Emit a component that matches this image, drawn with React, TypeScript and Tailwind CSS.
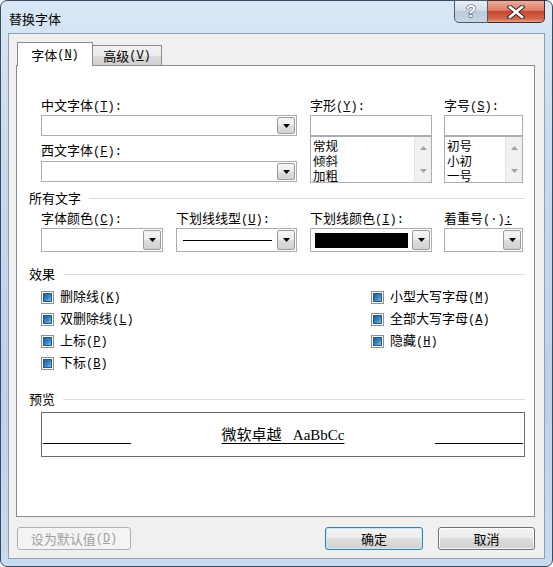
import React from "react";

const M = "font-['Liberation_Mono','DejaVu_Sans_Mono',monospace] text-[12px]";

function K({ k, colon = true }: { k: string; colon?: boolean }) {
  return (
    <span className={M}>
      (<span className="underline underline-offset-1">{k}</span>)
      {colon ? ":" : ""}
    </span>
  );
}

function Label({ children }: { children: React.ReactNode }) {
  return <div className="h-[16px] leading-[16px] text-[13px] whitespace-nowrap">{children}</div>;
}

function DropBtn() {
  return (
    <div className="w-[18px] h-full shrink-0 border border-[#9a9a9a] rounded-[2px] bg-[linear-gradient(180deg,#f7f7f7,#ececec_50%,#dedede_50%,#d2d2d2)] flex items-center justify-center">
      <svg width="7" height="4" viewBox="0 0 7 4">
        <path d="M0 0h7L3.5 4z" fill="#000" />
      </svg>
    </div>
  );
}

function Combo({ className, children }: { className: string; children?: React.ReactNode }) {
  return (
    <div className={`flex border border-[#abadb3] bg-white p-px ${className}`}>
      <div className="flex-1 min-w-0 flex items-center">{children}</div>
      <DropBtn />
    </div>
  );
}

function ListBox({ items }: { items: string[] }) {
  return (
    <div className="h-[47px] flex border border-[#abadb3] bg-white">
      <div className="flex-1 pl-[2px] text-[12.5px] leading-[15px] pt-px">
        {items.map((t) => (
          <div key={t} className="h-[15px]">{t}</div>
        ))}
      </div>
      <div className="w-[17px] shrink-0 bg-[#f0f0f0] border-l border-[#e3e3e3] flex flex-col justify-between items-center py-[9px]">
        <svg width="7" height="4" viewBox="0 0 7 4">
          <path d="M0 4h7L3.5 0z" fill="#a3a3a3" />
        </svg>
        <svg width="7" height="4" viewBox="0 0 7 4">
          <path d="M0 0h7L3.5 4z" fill="#a3a3a3" />
        </svg>
      </div>
    </div>
  );
}

function TextBox() {
  return <div className="h-[21px] border border-[#abadb3] bg-white" />;
}

function Header({ children }: { children: React.ReactNode }) {
  return (
    <div className="flex items-center gap-[8px] pl-[12px] pr-[9px] h-[16px]">
      <span className="text-[13px] leading-[16px] whitespace-nowrap">{children}</span>
      <div className="flex-1 h-px bg-[#d5dfe5]" />
    </div>
  );
}

function Check({ children }: { children: React.ReactNode }) {
  return (
    <div className="h-[22px] flex items-center gap-[6px]">
      <div className="w-[13px] h-[13px] border border-[#8e8f8f] bg-white p-px">
        <div className="w-full h-full border border-[#1d5a92] bg-[linear-gradient(135deg,#1f5f9c,#3a86c2_55%,#86bde2)]" />
      </div>
      <span className="text-[13px] leading-[16px] whitespace-nowrap">{children}</span>
    </div>
  );
}

function Btn({
  className,
  children,
  variant = "normal",
}: {
  className: string;
  children: React.ReactNode;
  variant?: "normal" | "default" | "disabled";
}) {
  const v =
    variant === "disabled"
      ? "border-[#adb2b5] bg-[#f4f4f4] text-[#a0a0a0]"
      : variant === "default"
      ? "border-[#3c7fb1] bg-[linear-gradient(180deg,#f4f4f4,#ececec_50%,#dfdfdf_50%,#d3d3d3)] shadow-[inset_0_0_0_1px_#c6e6f7] text-black"
      : "border-[#707070] bg-[linear-gradient(180deg,#f2f2f2,#ebebeb_50%,#dddddd_50%,#cfcfcf)] shadow-[inset_0_0_0_1px_#fbfbfb] text-black";
  return (
    <div
      className={`h-[23px] rounded-[3px] border flex items-center justify-center text-[13px] leading-[16px] ${v} ${className}`}
    >
      {children}
    </div>
  );
}

export default function App() {
  return (
    <div className="w-[553px] h-[567px] font-['Noto_Sans_CJK_SC','Noto_Sans',sans-serif] text-black">
      <div className="relative w-full h-full border border-[#3b4b5e] rounded-[7px] bg-[linear-gradient(180deg,#d9e7f6,#c6d9ee_30%,#bcd2ea_70%,#c8dbef)] flex flex-col px-[7px] pb-[7px]">
        {/* title bar */}
        <div className="h-[32px] shrink-0 flex items-center pl-px pt-[4px]">
          <span className="text-[13px] leading-[16px] text-black">替换字体</span>
        </div>
        {/* caption buttons */}
        <div className="absolute top-[-1px] right-[7px] flex h-[23px]">
          <div className="w-[34px] h-full border border-[#4b5a6c] rounded-bl-[5px] bg-[linear-gradient(180deg,#e8eef6,#d2dce8_45%,#bccadb_50%,#c9d6e4)] flex items-center justify-center">
            <span className="text-[17px] font-bold leading-none text-white [-webkit-text-stroke:1px_#3c4654] [paint-order:stroke_fill] font-['Liberation_Sans',sans-serif]">
              ?
            </span>
          </div>
          <div className="w-[57px] h-full border border-l-0 border-[#4a2a26] rounded-br-[5px] bg-[linear-gradient(180deg,#eab0a0,#dc7a66_45%,#c8452f_50%,#d2664c_85%,#e6a184)] flex items-center justify-center">
            <svg width="18" height="14" viewBox="0 0 18 14">
              <path d="M3 2L15 12M15 2L3 12" stroke="#3a2a2a" strokeWidth="4.6" strokeLinecap="square" />
              <path d="M3 2L15 12M15 2L3 12" stroke="#ffffff" strokeWidth="2.6" strokeLinecap="square" />
            </svg>
          </div>
        </div>

        {/* client area */}
        <div className="flex-1 border border-[#8fa0b5] bg-[#f0f0f0] flex flex-col pt-[8px] pl-[7px] pr-[9px] pb-[8px]">
          {/* tabs */}
          <div className="h-[23px] flex items-end ml-px shrink-0">
            <div className="relative z-10 w-[76px] h-[24px] -mb-px bg-white border border-b-0 border-[#898c95] flex items-center justify-center text-[13px] leading-[16px]">
              字体<K k="N" colon={false} />
            </div>
            <div className="w-[70px] h-[20px] -ml-px border border-b-0 border-[#898c95] bg-[linear-gradient(180deg,#f2f2f2,#ebebeb_50%,#dddddd_50%,#cfcfcf)] flex items-center justify-center text-[13px] leading-[16px]">
              高级<K k="V" colon={false} />
            </div>
          </div>

          {/* panel */}
          <div className="w-[519px] h-[452px] shrink-0 border border-[#898c95] bg-white flex flex-col">
            {/* font row */}
            <div className="flex pl-[24px] pt-[31px]">
              <div className="w-[256px] flex flex-col">
                <Label>
                  中文字体<K k="T" />
                </Label>
                <Combo className="h-[21px] mt-[2px]" />
                <div className="mt-[6px]">
                  <Label>
                    西文字体<K k="F" />
                  </Label>
                </div>
                <Combo className="h-[21px] mt-[3px]" />
              </div>
              <div className="w-[122px] ml-[13px] flex flex-col">
                <Label>
                  字形<K k="Y" />
                </Label>
                <div className="mt-[2px]">
                  <TextBox />
                </div>
                <ListBox items={["常规", "倾斜", "加粗"]} />
              </div>
              <div className="w-[79px] ml-[12px] flex flex-col">
                <Label>
                  字号<K k="S" />
                </Label>
                <div className="mt-[2px]">
                  <TextBox />
                </div>
                <ListBox items={["初号", "小初", "一号"]} />
              </div>
            </div>

            {/* all text */}
            <div className="mt-[7px]">
              <Header>所有文字</Header>
            </div>
            <div className="flex pl-[24px] mt-[4px]">
              <div className="w-[122px] flex flex-col">
                <Label>
                  字体颜色<K k="C" />
                </Label>
                <Combo className="h-[24px] mt-[2px]" />
              </div>
              <div className="w-[121px] ml-[13px] flex flex-col">
                <Label>
                  下划线线型<K k="U" />
                </Label>
                <Combo className="h-[24px] mt-[2px]">
                  <div className="ml-[5px] mr-[5px] flex-1 h-px bg-black" />
                </Combo>
              </div>
              <div className="w-[122px] ml-[13px] flex flex-col">
                <Label>
                  下划线颜色<K k="I" />
                </Label>
                <Combo className="h-[24px] mt-[2px]">
                  <div className="ml-[3px] mr-[4px] flex-1 h-[15px] bg-black" />
                </Combo>
              </div>
              <div className="w-[79px] ml-[12px] flex flex-col">
                <Label>
                  着重号<span className={M}>(·)<span className="underline underline-offset-1">:</span></span>
                </Label>
                <Combo className="h-[24px] mt-[2px]" />
              </div>
            </div>

            {/* effects */}
            <div className="mt-[14px]">
              <Header>效果</Header>
            </div>
            <div className="flex pl-[24px] mt-[4px]">
              <div className="w-[330px] flex flex-col">
                <Check>
                  删除线<K k="K" colon={false} />
                </Check>
                <Check>
                  双删除线<K k="L" colon={false} />
                </Check>
                <Check>
                  上标<K k="P" colon={false} />
                </Check>
                <Check>
                  下标<K k="B" colon={false} />
                </Check>
              </div>
              <div className="flex flex-col">
                <Check>
                  小型大写字母<K k="M" colon={false} />
                </Check>
                <Check>
                  全部大写字母<K k="A" colon={false} />
                </Check>
                <Check>
                  隐藏<K k="H" colon={false} />
                </Check>
              </div>
            </div>

            {/* preview */}
            <div className="mt-[17px]">
              <Header>预览</Header>
            </div>
            <div className="ml-[24px] mr-[9px] mt-[5px] h-[45px] border border-[#6d6d6d] flex px-px">
              <div className="w-[88px] h-px bg-black mt-[30px]" />
              <div className="flex-1 flex justify-center mt-[12px]">
                <span className="underline underline-offset-[3px] whitespace-pre text-[15px] leading-[18px] h-[18px]">
                  微软卓越
                  <span className="font-['Liberation_Serif',serif] text-[15px]">{"   AaBbCc"}</span>
                </span>
              </div>
              <div className="w-[88px] h-px bg-black mt-[30px]" />
            </div>
          </div>

          {/* buttons */}
          <div className="flex mt-[10px] pl-px">
            <Btn className="w-[114px]" variant="disabled">
              设为默认值<K k="D" colon={false} />
            </Btn>
            <div className="flex-1" />
            <Btn className="w-[98px]" variant="default">
              确定
            </Btn>
            <Btn className="w-[97px] ml-[15px]">取消</Btn>
          </div>
        </div>
      </div>
    </div>
  );
}
